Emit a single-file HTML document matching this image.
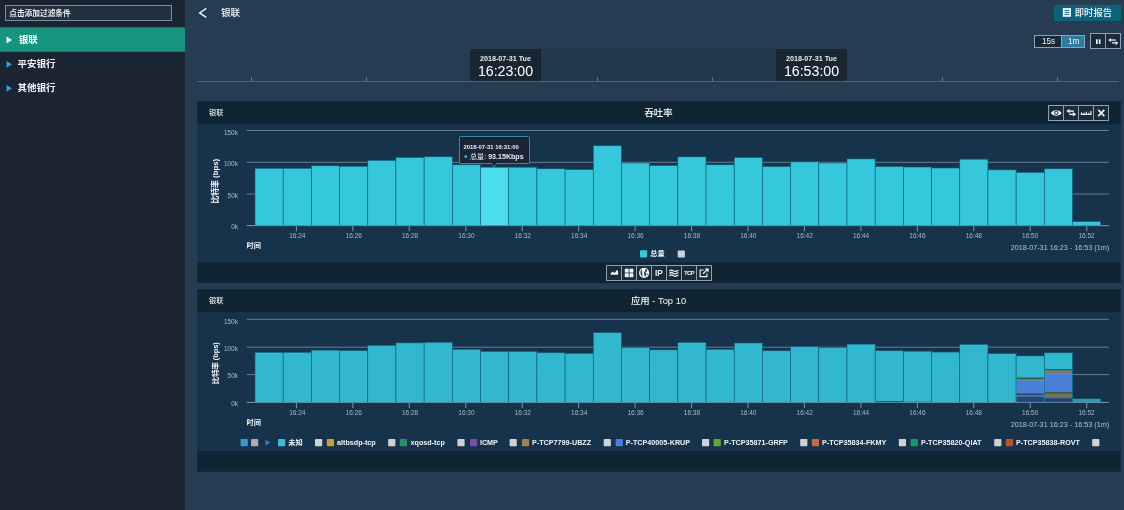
<!DOCTYPE html>
<html lang="zh-CN">
<head>
<meta charset="utf-8">
<title>银联</title>
<style>
*{box-sizing:border-box;margin:0;padding:0}
html,body{width:1124px;height:510px;overflow:hidden;background:#263c52;font-family:"Liberation Sans","Noto Sans CJK SC",sans-serif;color:#fff}
#app{position:absolute;left:0;top:0;width:1124px;height:510px;will-change:transform}
#side{position:absolute;left:0;top:0;width:185px;height:510px}
#sideedge{position:absolute;left:185px;top:0;width:2px;height:510px;background:#283f4f}
#filter{font-weight:700;position:absolute;left:5px;top:5px;width:167px;height:16px;border:1px solid #7f8e9b;background:#212f3f;font-size:7.7px;line-height:15.4px;padding-left:3.2px;color:#e8edf1;white-space:nowrap}
.nav{position:absolute;left:0;width:185px;height:24px;font-size:9.5px;line-height:26px;padding-left:17.5px;font-weight:700;color:#eef2f5;white-space:nowrap}
.nav.on{color:#fff;padding-left:18.7px}
#topline{position:absolute;left:187px;top:27px;width:937px;height:1px;background:#2a4358}
#title{font-weight:500;position:absolute;left:221px;top:5px;font-size:9.6px;line-height:15px;color:#f4f6f8;white-space:nowrap}
#report{font-weight:500;position:absolute;left:1054px;top:4.6px;width:67px;height:16.6px;background:#0f607b;font-size:9.3px;line-height:17.6px;color:#f2f8fa;white-space:nowrap;padding-left:20.8px}
.btng{position:absolute;border:1px solid #8ba3b4;background:#1a2a3b;display:flex}
.btng>div{flex:1;border-left:1px solid #8ba3b4;position:relative;text-align:center;color:#f0f4f7}
.btng>div:first-child{border-left:none}
#tl{position:absolute;left:197px;top:81px;width:922.4px;height:1px;background:#4a6378}
.tk{position:absolute;top:77px;width:1px;height:4px;background:#5f778a}
#band{position:absolute;left:470px;top:49px;width:377px;height:32.4px;background:#24384d}
.tip{position:absolute;top:49px;width:71px;height:32px;background:#1a2532;text-align:center;white-space:nowrap}
.tip b{display:block;font-size:7.2px;line-height:9px;margin-top:5.2px;color:#e9edf0}
.tip span{display:block;font-size:14.2px;line-height:14px;margin-top:0.8px;color:#fff}
.ph{position:absolute;left:197.3px;width:923.4px;background:#0f2332}
.pb{position:absolute;left:197.3px;width:923.4px;background:#193148}
.pt{font-weight:500;position:absolute;font-size:7.2px;line-height:10px;color:#dfe6eb;white-space:nowrap}
.ptitle{font-weight:500;position:absolute;left:197px;width:923px;text-align:center;font-size:9.4px;line-height:12px;color:#f4f6f8;white-space:nowrap}
svg{position:absolute;left:0;top:0}
svg text{font-family:"Liberation Sans","Noto Sans CJK SC",sans-serif}
.ax{font-size:6.5px;fill:#a9b8c6}
.lg{font-size:7.2px;font-weight:bold;fill:#f0f3f6}
.rg{font-size:7.24px;fill:#b6c3ce}
.tm{font-size:7.2px;font-weight:bold;fill:#f4f6f8}
</style>
</head>
<body>
<div id="app">
<svg width="1124" height="510" viewBox="0 0 1124 510">
<rect x="0" y="0" width="185" height="510" fill="#1a2432"/>
<rect x="185" y="0" width="2" height="510" fill="#283f4f"/>
<rect x="0" y="27.35" width="185" height="24.4" fill="#16947f"/>
<path d="M6.5 36.5 L12 39.9 L6.5 43.3 Z" fill="#fff"/>
<path d="M6.5 60.9 L12 64.3 L6.5 67.7 Z" fill="#2a9fd8"/>
<path d="M6.5 84.9 L12 88.3 L6.5 91.7 Z" fill="#2a9fd8"/>
<rect x="197.3" y="101.5" width="923.4" height="181.5" fill="#17334c"/>
<rect x="197.3" y="101.5" width="923.4" height="22.6" fill="#0f2533"/>
<rect x="197.3" y="262.3" width="923.4" height="20.7" fill="#0f2533"/>
<rect x="197.3" y="289.45" width="923.4" height="182.15" fill="#17334c"/>
<rect x="197.3" y="289.45" width="923.4" height="22.75" fill="#0f2533"/>
<rect x="197.3" y="451.2" width="923.4" height="20.4" fill="#0f2533"/>
</svg>
<div id="side">
  <div id="filter">点击添加过滤条件</div>
  <div class="nav on" style="top:27.3px">银联</div>
  <div class="nav" style="top:51.4px">平安银行</div>
  <div class="nav" style="top:75.4px">其他银行</div>
</div>

<div id="topline"></div>
<svg width="1124" height="30" viewBox="0 0 1124 30"><path d="M206.3 8.4 L199.6 12.9 L206.3 17.3" fill="none" stroke="#eef2f5" stroke-width="1.4"/></svg>
<div id="title">银联</div>
<div id="report">即时报告</div>
<svg width="1124" height="30" viewBox="0 0 1124 30" style="pointer-events:none">
  <rect x="1062.8" y="8.1" width="8.2" height="8.7" fill="#eef6f8"/>
  <rect x="1064.6" y="10" width="4.6" height="0.9" fill="#0f607b"/>
  <rect x="1064.6" y="12" width="4.6" height="0.9" fill="#0f607b"/>
  <rect x="1064.6" y="14" width="4.6" height="0.9" fill="#0f607b"/>
</svg>

<div class="btng" style="left:1034px;top:35.2px;width:51px;height:12.8px;font-size:8.2px;line-height:13.6px">
  <div style="flex:none;width:26px;padding-left:1px;line-height:12.8px">15s</div><div style="background:#2a7d9e;padding-left:1.2px;line-height:12.8px">1m</div>
</div>
<div class="btng" style="left:1090px;top:33.2px;width:31px;height:16.2px">
  <div></div><div></div>
</div>
<svg width="1124" height="60" viewBox="0 0 1124 60">
  <rect x="1096" y="39.3" width="1.7" height="4.7" fill="#f0f4f7"/>
  <rect x="1098.8" y="39.3" width="1.7" height="4.7" fill="#f0f4f7"/>
  <g fill="#f0f4f7">
    <path d="M1108.2 40 L1110.9 37.9 V42.1 Z"/><rect x="1110.8" y="39.4" width="4.9" height="1.25"/>
    <path d="M1118.3 43.1 L1115.6 41 V45.3 Z"/><rect x="1111.9" y="42.2" width="3.8" height="1.25"/>
  </g>
</svg>

<div id="band"></div>
<div id="tl"></div>
<div class="tk" style="left:251px"></div><div class="tk" style="left:366.2px"></div><div class="tk" style="left:481.4px"></div><div class="tk" style="left:596.6px"></div><div class="tk" style="left:711.8px"></div><div class="tk" style="left:827px"></div><div class="tk" style="left:942.2px"></div><div class="tk" style="left:1057.4px"></div>
<div class="tip" style="left:470px;border-radius:3px 0 0 3px"><b>2018-07-31 Tue</b><span>16:23:00</span></div>
<div class="tip" style="left:776px;border-radius:0 3px 3px 0"><b>2018-07-31 Tue</b><span>16:53:00</span></div>

<!-- panel 1 -->

<div class="pt" style="left:209px;top:107.6px">银联</div>
<div class="ptitle" style="top:106.6px">吞吐率</div>

<!-- panel 2 -->
<div class="pt" style="left:209px;top:296.2px">银联</div>
<div class="ptitle" style="top:294.6px">应用 - Top 10</div>

<svg width="1124" height="510" viewBox="0 0 1124 510">
<!-- chart 1 -->
<rect x="246.6" y="130.00" width="862.2" height="1" fill="#687f95"/>
<rect x="246.6" y="161.80" width="862.2" height="1" fill="#687f95"/>
<rect x="246.6" y="193.50" width="862.2" height="1" fill="#687f95"/>
<rect x="246.6" y="225.10" width="862.2" height="1" fill="#687f95"/>
<rect x="255.00" y="168.30" width="28.19" height="57.30" fill="#35c7dc" stroke="#0f5f7c" stroke-width="0.6"/>
<rect x="283.19" y="168.30" width="28.19" height="57.30" fill="#35c7dc" stroke="#0f5f7c" stroke-width="0.6"/>
<rect x="311.38" y="165.80" width="28.19" height="59.80" fill="#35c7dc" stroke="#0f5f7c" stroke-width="0.6"/>
<rect x="339.57" y="166.30" width="28.19" height="59.30" fill="#35c7dc" stroke="#0f5f7c" stroke-width="0.6"/>
<rect x="367.76" y="160.40" width="28.19" height="65.20" fill="#35c7dc" stroke="#0f5f7c" stroke-width="0.6"/>
<rect x="395.95" y="157.50" width="28.19" height="68.10" fill="#35c7dc" stroke="#0f5f7c" stroke-width="0.6"/>
<rect x="424.14" y="156.80" width="28.19" height="68.80" fill="#35c7dc" stroke="#0f5f7c" stroke-width="0.6"/>
<rect x="452.33" y="164.80" width="28.19" height="60.80" fill="#35c7dc" stroke="#0f5f7c" stroke-width="0.6"/>
<rect x="480.52" y="167.20" width="28.19" height="58.40" fill="#4bddee" stroke="#0f5f7c" stroke-width="0.6"/>
<rect x="508.71" y="167.20" width="28.19" height="58.40" fill="#35c7dc" stroke="#0f5f7c" stroke-width="0.6"/>
<rect x="536.90" y="168.80" width="28.19" height="56.80" fill="#35c7dc" stroke="#0f5f7c" stroke-width="0.6"/>
<rect x="565.09" y="169.60" width="28.19" height="56.00" fill="#35c7dc" stroke="#0f5f7c" stroke-width="0.6"/>
<rect x="593.28" y="145.80" width="28.19" height="79.80" fill="#35c7dc" stroke="#0f5f7c" stroke-width="0.6"/>
<rect x="621.47" y="162.95" width="28.19" height="62.65" fill="#35c7dc" stroke="#0f5f7c" stroke-width="0.6"/>
<rect x="649.66" y="165.50" width="28.19" height="60.10" fill="#35c7dc" stroke="#0f5f7c" stroke-width="0.6"/>
<rect x="677.85" y="156.90" width="28.19" height="68.70" fill="#35c7dc" stroke="#0f5f7c" stroke-width="0.6"/>
<rect x="706.04" y="164.80" width="28.19" height="60.80" fill="#35c7dc" stroke="#0f5f7c" stroke-width="0.6"/>
<rect x="734.23" y="157.60" width="28.19" height="68.00" fill="#35c7dc" stroke="#0f5f7c" stroke-width="0.6"/>
<rect x="762.42" y="166.50" width="28.19" height="59.10" fill="#35c7dc" stroke="#0f5f7c" stroke-width="0.6"/>
<rect x="790.61" y="161.90" width="28.19" height="63.70" fill="#35c7dc" stroke="#0f5f7c" stroke-width="0.6"/>
<rect x="818.80" y="162.95" width="28.19" height="62.65" fill="#35c7dc" stroke="#0f5f7c" stroke-width="0.6"/>
<rect x="846.99" y="158.90" width="28.19" height="66.70" fill="#35c7dc" stroke="#0f5f7c" stroke-width="0.6"/>
<rect x="875.18" y="166.50" width="28.19" height="59.10" fill="#35c7dc" stroke="#0f5f7c" stroke-width="0.6"/>
<rect x="903.37" y="167.00" width="28.19" height="58.60" fill="#35c7dc" stroke="#0f5f7c" stroke-width="0.6"/>
<rect x="931.56" y="168.00" width="28.19" height="57.60" fill="#35c7dc" stroke="#0f5f7c" stroke-width="0.6"/>
<rect x="959.75" y="159.20" width="28.19" height="66.40" fill="#35c7dc" stroke="#0f5f7c" stroke-width="0.6"/>
<rect x="987.94" y="169.85" width="28.19" height="55.75" fill="#35c7dc" stroke="#0f5f7c" stroke-width="0.6"/>
<rect x="1016.13" y="172.40" width="28.19" height="53.20" fill="#35c7dc" stroke="#0f5f7c" stroke-width="0.6"/>
<rect x="1044.32" y="168.85" width="28.19" height="56.75" fill="#35c7dc" stroke="#0f5f7c" stroke-width="0.6"/>
<rect x="1072.51" y="221.60" width="28.19" height="4.00" fill="#35c7dc" stroke="#0f5f7c" stroke-width="0.6"/>
<rect x="246.6" y="225.10" width="862.2" height="1" fill="#8ea3b4" opacity="0.55"/>
<text x="238" y="134.80" text-anchor="end" class="ax">150k</text>
<text x="238" y="166.20" text-anchor="end" class="ax">100k</text>
<text x="238" y="197.60" text-anchor="end" class="ax">50k</text>
<text x="238" y="228.70" text-anchor="end" class="ax">0k</text>
<rect x="295.90" y="226.10" width="1" height="5.2" fill="#8197aa"/>
<text x="297.29" y="238.00" text-anchor="middle" class="ax">16:24</text>
<rect x="352.35" y="226.10" width="1" height="5.2" fill="#8197aa"/>
<text x="353.67" y="238.00" text-anchor="middle" class="ax">16:26</text>
<rect x="408.80" y="226.10" width="1" height="5.2" fill="#8197aa"/>
<text x="410.05" y="238.00" text-anchor="middle" class="ax">16:28</text>
<rect x="465.25" y="226.10" width="1" height="5.2" fill="#8197aa"/>
<text x="466.43" y="238.00" text-anchor="middle" class="ax">16:30</text>
<rect x="521.70" y="226.10" width="1" height="5.2" fill="#8197aa"/>
<text x="522.81" y="238.00" text-anchor="middle" class="ax">16:32</text>
<rect x="578.15" y="226.10" width="1" height="5.2" fill="#8197aa"/>
<text x="579.18" y="238.00" text-anchor="middle" class="ax">16:34</text>
<rect x="634.60" y="226.10" width="1" height="5.2" fill="#8197aa"/>
<text x="635.57" y="238.00" text-anchor="middle" class="ax">16:36</text>
<rect x="691.05" y="226.10" width="1" height="5.2" fill="#8197aa"/>
<text x="691.94" y="238.00" text-anchor="middle" class="ax">16:38</text>
<rect x="747.50" y="226.10" width="1" height="5.2" fill="#8197aa"/>
<text x="748.33" y="238.00" text-anchor="middle" class="ax">16:40</text>
<rect x="803.95" y="226.10" width="1" height="5.2" fill="#8197aa"/>
<text x="804.71" y="238.00" text-anchor="middle" class="ax">16:42</text>
<rect x="860.40" y="226.10" width="1" height="5.2" fill="#8197aa"/>
<text x="861.09" y="238.00" text-anchor="middle" class="ax">16:44</text>
<rect x="916.85" y="226.10" width="1" height="5.2" fill="#8197aa"/>
<text x="917.47" y="238.00" text-anchor="middle" class="ax">16:46</text>
<rect x="973.30" y="226.10" width="1" height="5.2" fill="#8197aa"/>
<text x="973.85" y="238.00" text-anchor="middle" class="ax">16:48</text>
<rect x="1029.75" y="226.10" width="1" height="5.2" fill="#8197aa"/>
<text x="1030.22" y="238.00" text-anchor="middle" class="ax">16:50</text>
<rect x="1086.20" y="226.10" width="1" height="5.2" fill="#8197aa"/>
<text x="1086.61" y="238.00" text-anchor="middle" class="ax">16:52</text>
<text x="246.6" y="247.6" class="tm">时间</text>
<text x="1109.2" y="249.8" text-anchor="end" class="rg">2018-07-31 16:23 - 16:53 (1m)</text>
<text transform="translate(217.9 181.2) rotate(-90)" text-anchor="middle" class="tm" style="font-size:7.8px">比特率 (bps)</text>
<rect x="640" y="250.2" width="7.2" height="7.2" rx="0.8" fill="#35c7dc"/>
<text x="650.2" y="256.4" class="lg">总量</text>
<rect x="677.7" y="250.4" width="7.2" height="7.2" rx="0.8" fill="#cfd2d4"/>

<!-- chart 2 -->
<rect x="246.6" y="318.80" width="862.2" height="1" fill="#687f95"/>
<rect x="246.6" y="346.70" width="862.2" height="1" fill="#687f95"/>
<rect x="246.6" y="374.10" width="862.2" height="1" fill="#687f95"/>
<rect x="246.6" y="401.90" width="862.2" height="1" fill="#687f95"/>
<rect x="255.00" y="352.33" width="28.19" height="50.07" fill="#32b8ce" stroke="#0f5f7c" stroke-width="0.6"/>
<rect x="283.19" y="352.33" width="28.19" height="50.07" fill="#32b8ce" stroke="#0f5f7c" stroke-width="0.6"/>
<rect x="311.38" y="350.15" width="28.19" height="52.25" fill="#32b8ce" stroke="#0f5f7c" stroke-width="0.6"/>
<rect x="339.57" y="350.58" width="28.19" height="51.82" fill="#32b8ce" stroke="#0f5f7c" stroke-width="0.6"/>
<rect x="367.76" y="345.43" width="28.19" height="56.97" fill="#32b8ce" stroke="#0f5f7c" stroke-width="0.6"/>
<rect x="395.95" y="342.89" width="28.19" height="59.51" fill="#32b8ce" stroke="#0f5f7c" stroke-width="0.6"/>
<rect x="424.14" y="342.28" width="28.19" height="60.12" fill="#32b8ce" stroke="#0f5f7c" stroke-width="0.6"/>
<rect x="452.33" y="349.27" width="28.19" height="53.13" fill="#32b8ce" stroke="#0f5f7c" stroke-width="0.6"/>
<rect x="480.52" y="351.37" width="28.19" height="51.03" fill="#32b8ce" stroke="#0f5f7c" stroke-width="0.6"/>
<rect x="508.71" y="351.37" width="28.19" height="51.03" fill="#32b8ce" stroke="#0f5f7c" stroke-width="0.6"/>
<rect x="536.90" y="352.77" width="28.19" height="49.63" fill="#32b8ce" stroke="#0f5f7c" stroke-width="0.6"/>
<rect x="565.09" y="353.47" width="28.19" height="48.93" fill="#32b8ce" stroke="#0f5f7c" stroke-width="0.6"/>
<rect x="593.28" y="332.67" width="28.19" height="69.73" fill="#32b8ce" stroke="#0f5f7c" stroke-width="0.6"/>
<rect x="621.47" y="347.66" width="28.19" height="54.74" fill="#32b8ce" stroke="#0f5f7c" stroke-width="0.6"/>
<rect x="649.66" y="349.88" width="28.19" height="52.52" fill="#32b8ce" stroke="#0f5f7c" stroke-width="0.6"/>
<rect x="677.85" y="342.37" width="28.19" height="60.03" fill="#32b8ce" stroke="#0f5f7c" stroke-width="0.6"/>
<rect x="706.04" y="349.27" width="28.19" height="53.13" fill="#32b8ce" stroke="#0f5f7c" stroke-width="0.6"/>
<rect x="734.23" y="342.98" width="28.19" height="59.42" fill="#32b8ce" stroke="#0f5f7c" stroke-width="0.6"/>
<rect x="762.42" y="350.76" width="28.19" height="51.64" fill="#32b8ce" stroke="#0f5f7c" stroke-width="0.6"/>
<rect x="790.61" y="346.74" width="28.19" height="55.66" fill="#32b8ce" stroke="#0f5f7c" stroke-width="0.6"/>
<rect x="818.80" y="347.66" width="28.19" height="54.74" fill="#32b8ce" stroke="#0f5f7c" stroke-width="0.6"/>
<rect x="846.99" y="344.12" width="28.19" height="58.28" fill="#32b8ce" stroke="#0f5f7c" stroke-width="0.6"/>
<rect x="875.18" y="350.76" width="28.19" height="51.64" fill="#32b8ce" stroke="#0f5f7c" stroke-width="0.6"/>
<rect x="903.37" y="351.19" width="28.19" height="51.21" fill="#32b8ce" stroke="#0f5f7c" stroke-width="0.6"/>
<rect x="931.56" y="352.07" width="28.19" height="50.33" fill="#32b8ce" stroke="#0f5f7c" stroke-width="0.6"/>
<rect x="959.75" y="344.38" width="28.19" height="58.02" fill="#32b8ce" stroke="#0f5f7c" stroke-width="0.6"/>
<rect x="987.94" y="353.68" width="28.19" height="48.72" fill="#32b8ce" stroke="#0f5f7c" stroke-width="0.6"/>
<rect x="1016.13" y="355.91" width="28.19" height="46.49" fill="#32b8ce" stroke="#0f5f7c" stroke-width="0.6"/>
<rect x="1044.32" y="352.81" width="28.19" height="49.59" fill="#32b8ce" stroke="#0f5f7c" stroke-width="0.6"/>
<rect x="1072.51" y="398.90" width="28.19" height="3.50" fill="#32b8ce" stroke="#0f5f7c" stroke-width="0.6"/>
<rect x="1016.63" y="377.50" width="27.19" height="1.50" fill="#2f5a48"/>
<rect x="1016.63" y="379.00" width="27.19" height="1.60" fill="#7c7a62"/>
<rect x="1016.63" y="380.60" width="27.19" height="12.90" fill="#4a80d8"/>
<rect x="1016.63" y="393.50" width="27.19" height="1.50" fill="#2a3a6a"/>
<rect x="1016.63" y="395.00" width="27.19" height="1.60" fill="#4a8a6a"/>
<rect x="1016.63" y="396.60" width="27.19" height="5.80" fill="#2a4282"/>
<rect x="1044.82" y="369.00" width="27.19" height="1.60" fill="#2f5a48"/>
<rect x="1044.82" y="370.60" width="27.19" height="2.90" fill="#7c7c66"/>
<rect x="1044.82" y="373.50" width="27.19" height="18.40" fill="#4a80d8"/>
<rect x="1044.82" y="391.90" width="27.19" height="1.90" fill="#3a5a48"/>
<rect x="1044.82" y="393.80" width="27.19" height="4.40" fill="#6e7458"/>
<rect x="1044.82" y="398.20" width="27.19" height="4.20" fill="#23406e"/>
<rect x="875.68" y="401.20" width="27.19" height="1.20" fill="#2a4a5a"/>
<rect x="903.87" y="401.00" width="27.19" height="1.40" fill="#6a8a5a"/>
<rect x="1073.01" y="399.20" width="27.19" height="3.20" fill="#2f97b3"/>
<rect x="246.6" y="401.90" width="862.2" height="1" fill="#8ea3b4" opacity="0.55"/>
<text x="238" y="323.60" text-anchor="end" class="ax">150k</text>
<text x="238" y="351.10" text-anchor="end" class="ax">100k</text>
<text x="238" y="378.20" text-anchor="end" class="ax">50k</text>
<text x="238" y="405.50" text-anchor="end" class="ax">0k</text>
<rect x="295.90" y="402.90" width="1" height="5.2" fill="#8197aa"/>
<text x="297.29" y="414.55" text-anchor="middle" class="ax">16:24</text>
<rect x="352.35" y="402.90" width="1" height="5.2" fill="#8197aa"/>
<text x="353.67" y="414.55" text-anchor="middle" class="ax">16:26</text>
<rect x="408.80" y="402.90" width="1" height="5.2" fill="#8197aa"/>
<text x="410.05" y="414.55" text-anchor="middle" class="ax">16:28</text>
<rect x="465.25" y="402.90" width="1" height="5.2" fill="#8197aa"/>
<text x="466.43" y="414.55" text-anchor="middle" class="ax">16:30</text>
<rect x="521.70" y="402.90" width="1" height="5.2" fill="#8197aa"/>
<text x="522.81" y="414.55" text-anchor="middle" class="ax">16:32</text>
<rect x="578.15" y="402.90" width="1" height="5.2" fill="#8197aa"/>
<text x="579.18" y="414.55" text-anchor="middle" class="ax">16:34</text>
<rect x="634.60" y="402.90" width="1" height="5.2" fill="#8197aa"/>
<text x="635.57" y="414.55" text-anchor="middle" class="ax">16:36</text>
<rect x="691.05" y="402.90" width="1" height="5.2" fill="#8197aa"/>
<text x="691.94" y="414.55" text-anchor="middle" class="ax">16:38</text>
<rect x="747.50" y="402.90" width="1" height="5.2" fill="#8197aa"/>
<text x="748.33" y="414.55" text-anchor="middle" class="ax">16:40</text>
<rect x="803.95" y="402.90" width="1" height="5.2" fill="#8197aa"/>
<text x="804.71" y="414.55" text-anchor="middle" class="ax">16:42</text>
<rect x="860.40" y="402.90" width="1" height="5.2" fill="#8197aa"/>
<text x="861.09" y="414.55" text-anchor="middle" class="ax">16:44</text>
<rect x="916.85" y="402.90" width="1" height="5.2" fill="#8197aa"/>
<text x="917.47" y="414.55" text-anchor="middle" class="ax">16:46</text>
<rect x="973.30" y="402.90" width="1" height="5.2" fill="#8197aa"/>
<text x="973.85" y="414.55" text-anchor="middle" class="ax">16:48</text>
<rect x="1029.75" y="402.90" width="1" height="5.2" fill="#8197aa"/>
<text x="1030.22" y="414.55" text-anchor="middle" class="ax">16:50</text>
<rect x="1086.20" y="402.90" width="1" height="5.2" fill="#8197aa"/>
<text x="1086.61" y="414.55" text-anchor="middle" class="ax">16:52</text>
<text x="246.6" y="424.5" class="tm">时间</text>
<text x="1109.2" y="426.6" text-anchor="end" class="rg">2018-07-31 16:23 - 16:53 (1m)</text>
<text transform="translate(217.8 363.2) rotate(-90)" text-anchor="middle" class="tm" style="font-size:7.35px">比特率 (bps)</text>
<rect x="240.6" y="439.0" width="7.2" height="7.2" rx="0.8" fill="#3a98d0"/>
<rect x="251" y="439.0" width="7.2" height="7.2" rx="0.8" fill="#a9acb0"/>
<path d="M265.4 439.8 L270.4 442.6 L265.4 445.4 Z" fill="#2a7fc0"/>
<rect x="278.0" y="439.0" width="7.2" height="7.2" rx="0.8" fill="#35c0d8"/>
<text x="288.3" y="444.95" class="lg">未知</text>
<rect x="315.0" y="439.0" width="7.2" height="7.2" rx="0.8" fill="#cfd2d4"/>
<rect x="326.8" y="439.0" width="7.2" height="7.2" rx="0.8" fill="#c8a030"/>
<text x="337.0" y="444.95" class="lg">altbsdp-tcp</text>
<rect x="388.2" y="439.0" width="7.2" height="7.2" rx="0.8" fill="#cfd2d4"/>
<rect x="399.8" y="439.0" width="7.2" height="7.2" rx="0.8" fill="#2a9060"/>
<text x="410.5" y="444.95" class="lg">xqosd-tcp</text>
<rect x="457.4" y="439.0" width="7.2" height="7.2" rx="0.8" fill="#cfd2d4"/>
<rect x="470.0" y="439.0" width="7.2" height="7.2" rx="0.8" fill="#7a4fa0"/>
<text x="479.9" y="444.95" class="lg">ICMP</text>
<rect x="509.6" y="439.0" width="7.2" height="7.2" rx="0.8" fill="#cfd2d4"/>
<rect x="521.9" y="439.0" width="7.2" height="7.2" rx="0.8" fill="#a08050"/>
<text x="532.0" y="444.95" class="lg">P-TCP7799-UBZZ</text>
<rect x="603.7" y="439.0" width="7.2" height="7.2" rx="0.8" fill="#cfd2d4"/>
<rect x="615.6" y="439.0" width="7.2" height="7.2" rx="0.8" fill="#4a7fe0"/>
<text x="625.8" y="444.95" class="lg">P-TCP40005-KRUP</text>
<rect x="702.0" y="439.0" width="7.2" height="7.2" rx="0.8" fill="#cfd2d4"/>
<rect x="713.6" y="439.0" width="7.2" height="7.2" rx="0.8" fill="#5fa83a"/>
<text x="724.0" y="444.95" class="lg">P-TCP35871-GRFP</text>
<rect x="800.2" y="439.0" width="7.2" height="7.2" rx="0.8" fill="#cfd2d4"/>
<rect x="811.8" y="439.0" width="7.2" height="7.2" rx="0.8" fill="#c86a40"/>
<text x="822.0" y="444.95" class="lg">P-TCP35834-FKMY</text>
<rect x="898.8" y="439.0" width="7.2" height="7.2" rx="0.8" fill="#cfd2d4"/>
<rect x="910.7" y="439.0" width="7.2" height="7.2" rx="0.8" fill="#1a9a60"/>
<text x="920.9" y="444.95" class="lg">P-TCP35820-QIAT</text>
<rect x="994.2" y="439.0" width="7.2" height="7.2" rx="0.8" fill="#cfd2d4"/>
<rect x="1005.8" y="439.0" width="7.2" height="7.2" rx="0.8" fill="#c05030"/>
<text x="1016.0" y="444.95" class="lg">P-TCP35838-ROVT</text>
<rect x="1092.2" y="439.0" width="7.2" height="7.2" rx="0.8" fill="#cfd2d4"/>
</svg>

<!-- hover tooltip chart 1 -->
<div style="position:absolute;left:458.8px;top:136.4px;width:70.8px;height:27.2px;border:1px solid #2c8fa5;background:#1a2537;border-radius:1.5px"></div>
<svg width="1124" height="510" viewBox="0 0 1124 510">
<path d="M490.6 162.7 L494.1 167 L497.6 162.7" fill="#1a2537" stroke="#2c8fa5" stroke-width="1"/>
<rect x="491.6" y="161.6" width="5" height="1.4" fill="#1a2537"/>
<text x="463.5" y="149.2" style="font-size:5.9px;font-weight:bold;fill:#e8edf1">2018-07-31 16:31:00</text>
<circle cx="465.8" cy="156.6" r="1.4" fill="#35c7dc"/>
<text x="470" y="159" style="font-size:7.1px;fill:#e8edf1">总量: <tspan font-weight="bold">93.15Kbps</tspan></text>
</svg>

<!-- panel1 header buttons -->
<div class="btng" style="left:1048.3px;top:105.1px;width:60.8px;height:15.8px;background:#1a2b3c;border-radius:0.6px"><div></div><div></div><div></div><div></div></div>
<!-- panel1 footer buttons -->
<div class="btng" style="left:606.3px;top:265.2px;width:105.5px;height:15.4px;background:#1a2b3c;border-radius:0.6px"><div></div><div></div><div></div><div></div><div></div><div></div><div></div></div>
<svg width="1124" height="510" viewBox="0 0 1124 510">
<g fill="#eef2f5">
<!-- header: eye -->
<path d="M1050.9 112.9 C1053.2 109.2 1059.4 109.2 1061.7 112.9 C1059.4 116.6 1053.2 116.6 1050.9 112.9 Z"/>
<circle cx="1056.3" cy="112.9" r="2.15" fill="#2c3f53"/>
<circle cx="1056.3" cy="112.9" r="1.1"/>
<!-- header: retweet -->
<path d="M1066.2 111.1 L1069.6 108.9 V113.3 Z"/><rect x="1069.5" y="110.4" width="4.3" height="1.45"/>
<path d="M1076.3 114.3 L1072.9 112.1 V116.5 Z"/><rect x="1069.4" y="113.6" width="3.7" height="1.45"/>
<!-- header: mini bars -->
<rect x="1080.9" y="113.8" width="10.3" height="1.2"/>
<rect x="1080.9" y="112.4" width="1.25" height="2.4"/>
<rect x="1083.3" y="112.9" width="1.25" height="1.6"/>
<rect x="1085.6" y="111.7" width="1.25" height="2.8"/>
<rect x="1088" y="112.8" width="1.25" height="1.7"/>
<rect x="1090.3" y="111.1" width="1.25" height="3.6"/>
<!-- header: X -->
<path d="M1098.3 109.9 L1104.3 116.2 M1104.3 109.9 L1098.3 116.2" stroke="#eef2f5" stroke-width="1.7" fill="none"/>
<!-- footer 1: area -->
<path d="M610.7 274.8 V273.2 L612.9 271.6 L614.6 272.9 L616.9 270 L618.1 271 V274.8 Z"/>
<!-- footer 2: th-large -->
<rect x="624.8" y="268.7" width="3.9" height="3.9"/><rect x="629.5" y="268.7" width="3.9" height="3.9"/>
<rect x="624.8" y="273.3" width="3.9" height="3.9"/><rect x="629.5" y="273.3" width="3.9" height="3.9"/>
<!-- footer 3: globe -->
<circle cx="644.1" cy="272.9" r="5.1"/>
<g fill="#22364a">
<path d="M641.2 269.6 C640.2 271 640.3 273.6 641.4 275.8 L642.6 276.4 C641.9 274.6 642.6 273.6 642 272.2 C641.6 271.2 642.2 270 641.2 269.6 Z"/>
<path d="M645.2 269.2 L647.3 269.6 L646.6 271.4 L645.2 272.4 L646.4 273.6 L646 275.8 L644.8 276.8 L644.4 274.4 L643.8 272.6 L645.2 271 Z"/>
<path d="M647.6 273 L648.4 274.4 L647.4 275.6 Z"/>
</g>
<!-- footer 5: waves -->
<g fill="none" stroke="#eef2f5" stroke-width="1.25">
<path d="M669.4 271.2 C670.6 269.8 671.9 269.8 673.2 270.8 C674.6 271.9 676 271.9 678.4 270.2"/>
<path d="M669.4 273.6 C670.6 272.2 671.9 272.2 673.2 273.2 C674.6 274.3 676 274.3 678.4 272.6"/>
<path d="M669.4 276 C670.6 274.6 671.9 274.6 673.2 275.6 C674.6 276.7 676 276.7 678.4 275"/>
</g>
<!-- footer 7: external link -->
<path d="M703.6 270 H700.1 V276.6 H706.9 V273.6" fill="none" stroke="#eef2f5" stroke-width="1.15"/>
<path d="M703 273.8 L707.6 269.2" fill="none" stroke="#eef2f5" stroke-width="1.25"/>
<path d="M704.6 268.5 H708.7 V272.6 Z"/>
</g>
<text x="655" y="276.05" style="font-size:8.4px;font-weight:bold;fill:#eef2f5">IP</text>
<text x="684.1" y="274.8" style="font-size:6.1px;font-weight:bold;fill:#eef2f5;letter-spacing:-0.85px">TCP</text>
</svg>

</div>
</body>
</html>
